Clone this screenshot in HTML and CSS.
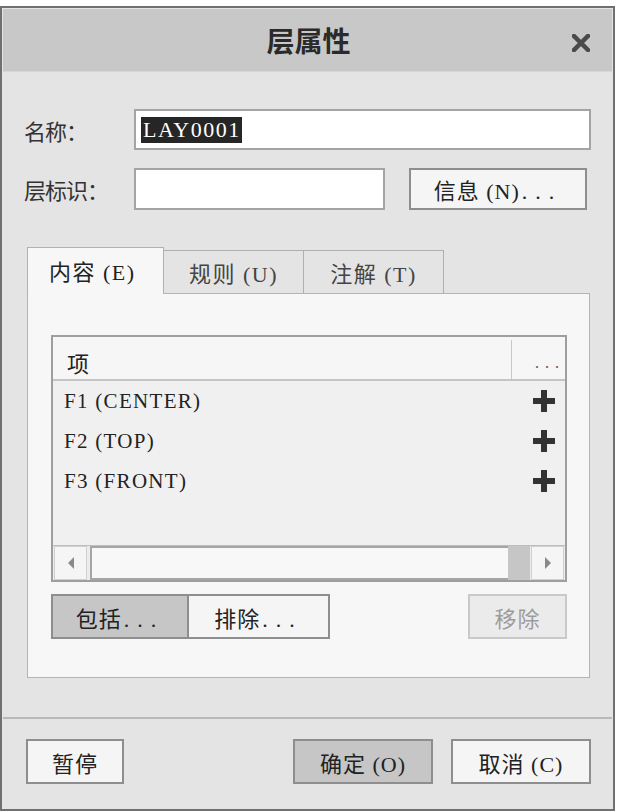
FILE: index.html
```html
<!DOCTYPE html>
<html>
	<head>
		<meta charset="utf-8">
		<title>层属性</title>
	<link rel="stylesheet" href="styles.css">
	</head>
	<body>
	<div class="dialog">
		<div class="titlebar">
			<span class="title">层属性</span>
			<span class="close">
				<svg width="18" height="18" viewBox="0 0 18 18"><path d="M2 2 L16 16 M16 2 L2 16" stroke="#4a4a4a" stroke-width="4.5" stroke-linecap="square"/></svg>
			</span>
		</div>
		<div class="body">
			<div class="row">
				<label class="lab">名称：</label>
				<div class="field name"><span class="sel">LAY0001</span></div>
			</div>
			<div class="row second">
				<label class="lab">层标识：</label>
				<div class="field ident"></div>
				<button class="btn info">信息 (N)<span class="dots">...</span></button>
			</div>

			<div class="tabs">
				<div class="tab on">内容 (E)</div>
				<div class="tab">规则 (U)</div>
				<div class="tab">注解 (T)</div>
			</div>
			<div class="panel">
				<div class="list">
					<div class="head">
						<span class="hcol">项</span>
						<span class="hdots">...</span>
					</div>
					<div class="item"><span>F1 (CENTER)</span><svg class="plus" width="24" height="24" viewBox="0 0 24 24"><path d="M9 1h6v8h8v6h-8v8h-6v-8h-8v-6h8z" fill="#333"/></svg></div>
					<div class="item"><span>F2 (TOP)</span><svg class="plus" width="24" height="24" viewBox="0 0 24 24"><path d="M9 1h6v8h8v6h-8v8h-6v-8h-8v-6h8z" fill="#333"/></svg></div>
					<div class="item"><span>F3 (FRONT)</span><svg class="plus" width="24" height="24" viewBox="0 0 24 24"><path d="M9 1h6v8h8v6h-8v8h-6v-8h-8v-6h8z" fill="#333"/></svg></div>
					<div class="spacer"></div>
					<div class="hscroll">
						<div class="arrow"><svg width="10" height="14" viewBox="0 0 10 14"><path d="M8 1 L2 7 L8 13z" fill="#8a8a8a"/></svg></div>
						<div class="track"></div>
						<div class="thumb"></div>
						<div class="arrow"><svg width="10" height="14" viewBox="0 0 10 14"><path d="M2 1 L8 7 L2 13z" fill="#8a8a8a"/></svg></div>
					</div>
				</div>
				<div class="acts">
					<button class="btn down inc">包括<span class="dots">...</span></button>
					<button class="btn exc">排除<span class="dots">...</span></button>
					<button class="btn off rem">移除</button>
				</div>
			</div>
		</div>
		<div class="sep"></div>
		<div class="foot">
			<button class="btn pause">暂停</button>
			<button class="btn down ok">确定 (O)</button>
			<button class="btn cancel">取消 (C)</button>
		</div>
	</div>
	</body>
</html>
```

FILE: styles.css
```css
*{
	box-sizing: border-box;
}
body{
	margin: 0;
	background: #fff;
	font-family: "Liberation Serif", "Noto Sans CJK SC", serif;
	font-size: 21px;
	color: #222;
}
.dialog{
	width: 615px;
	margin-top: 6px;
	border: 2px solid #707070;
	background: #e4e4e4;
}
.titlebar{
	height: 63px;
	margin: 1px 1px 0 1px;
	background: #c8c8c8;
	border-bottom: 1px solid #d6d6d6;
	display: flex;
	align-items: center;
	justify-content: center;
	position: relative;
}
.title{
	font-family: "Noto Sans CJK SC", sans-serif;
	font-weight: bold;
	font-size: 28px;
	color: #2a2a2a;
	margin-left: 2px;
}
.close{
	position: absolute;
	right: 22px;
	top: 24px;
	width: 18px;
	height: 18px;
}
.body{
	padding: 37px 22px 0 22px;
}
.row{
	display: flex;
	align-items: center;
}
.second{
	margin-top: 18px;
}
.lab{
	width: 110px;
	font-family: "Noto Sans CJK SC", sans-serif;
	font-size: 22px;
	color: #333;
	letter-spacing: -1px;
}
.field{
	height: 41px;
	background: #fff;
	border: 2px solid #a4a4a4;
	display: flex;
	align-items: center;
	padding-left: 5px;
}
.name{
	flex: 1;
}
.ident{
	width: 251px;
	height: 42px;
}
.sel{
	background: #262626;
	color: #fff;
	font-family: "Liberation Serif", serif;
	font-size: 22px;
	letter-spacing: 1.5px;
	padding: 0 1px 0 2px;
	line-height: 26px;
}
.btn{
	font-family: "Liberation Serif", "Noto Sans CJK SC", serif;
	font-size: 22px;
	color: #222;
	background: #f5f5f5;
	border: 2px solid #8e8e8e;
	height: 45px;
	padding: 0;
	letter-spacing: 1px;
}
.dots{
	letter-spacing: 8px;
	margin-left: 2px;
}
.down{
	background: #c6c6c6;
}
.off{
	background: #ebebeb;
	border-color: #c9c9c9;
	color: #9c9c9c;
}
.info{
	width: 178px;
	height: 42px;
	margin-left: 24px;
}

.tabs{
	display: flex;
	align-items: flex-end;
	margin: 38px 1px 0 3px;
	height: 45px;
}
.tab{
	width: 140px;
	height: 43px;
	background: #e4e4e4;
	border: 1px solid #b0b0b0;
	border-bottom: none;
	color: #444;
	font-size: 22px;
	display: flex;
	align-items: center;
	justify-content: center;
	letter-spacing: 1.5px;
}
.tab + .tab{
	border-left: none;
}
.tab.on{
	width: 137px;
	height: 47px;
	margin-bottom: -1px;
	background: #f7f7f7;
	color: #222;
	position: relative;
	justify-content: flex-start;
	padding-left: 21px;
	padding-bottom: 3px;
}
.panel{
	margin: 0 1px 0 3px;
	height: 385px;
	background: #f7f7f7;
	border: 1px solid #b4b4b4;
	padding: 41px 22px 0 23px;
}
.list{
	height: 247px;
	border: 2px solid #9e9e9e;
	background: #f0f0f0;
	display: flex;
	flex-direction: column;
}
.head{
	height: 44px;
	background: #f6f6f6;
	border-bottom: 2px solid #c4c4c4;
	display: flex;
}
.hcol{
	flex: 1;
	font-family: "Noto Sans CJK SC", sans-serif;
	font-size: 22px;
	padding: 6px 0 0 14px;
	border-right: 1px solid #c8c8c8;
	margin-top: 3px;
}
.hdots{
	width: 53px;
	font-size: 16px;
	color: #555;
	letter-spacing: 6px;
	text-align: right;
	padding: 17px 0 0 0;
}
.item{
	height: 40px;
	display: flex;
	align-items: center;
	justify-content: space-between;
	padding: 0 9px 0 11px;
	letter-spacing: 1.3px;
	font-size: 21px;
}
.item:first-of-type{
	margin-top: 3px;
}
.spacer{
	flex: 1;
}
.hscroll{
	height: 35px;
	display: flex;
	border-top: 1px solid #bdbdbd;
	background: #ececec;
	padding: 0 1px;
}
.arrow{
	width: 33px;
	display: flex;
	align-items: center;
	justify-content: center;
	background: #f5f5f5;
	border: 1px solid #d0d0d0;
}
.track{
	flex: 1;
	margin-left: 3px;
	background: #f8f8f8;
	border: 2px solid #a6a6a6;
	border-right: none;
}
.thumb{
	width: 22px;
	background: #c6c6c6;
	margin-right: 1px;
}
.acts{
	display: flex;
	margin-top: 12px;
}
.inc{
	width: 138px;
}
.exc{
	width: 141px;
	border-left: none;
}
.rem{
	width: 99px;
	margin-left: auto;
}
.sep{
	height: 2px;
	background: #b9b9b9;
	margin: 39px 1px 0 1px;
}
.foot{
	display: flex;
	padding: 20px 22px 25px 24px;
}
.pause{
	width: 98px;
}
.ok{
	width: 140px;
	margin-left: auto;
}
.cancel{
	width: 140px;
	margin-left: 18px;
}
```
